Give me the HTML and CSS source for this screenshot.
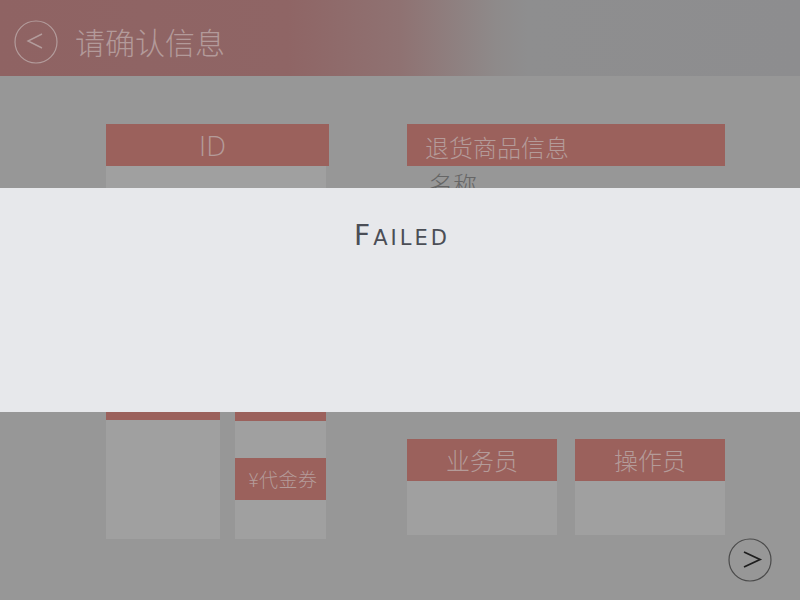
FILE: index.html
```html
<!DOCTYPE html>
<html lang="zh">
<head>
<meta charset="utf-8">
<title>请确认信息</title>
<link rel="stylesheet" href="styles.css">
</head>
<body>
<div class="page">
  <header class="topbar">
    <div class="round-btn back-btn">
      <svg width="44" height="44" viewBox="0 0 44 44"><circle cx="22" cy="22" r="21" fill="none" stroke="#b39c9c" stroke-width="1.2"/><polyline points="28,14 14,21 28,28" fill="none" stroke="#b39c9c" stroke-width="1.4"/></svg>
    </div>
    <h1 class="title">请确认信息</h1>
  </header>
  <main class="content">
    <section class="col-left">
      <div class="card id-card">
        <div class="card-head id-head">ID</div>
        <div class="card-body id-body"></div>
      </div>
      <div class="sub-row">
        <div class="card sub-a">
          <div class="card-head"></div>
          <div class="card-body sub-a-body"></div>
        </div>
        <div class="card sub-b">
          <div class="card-head"></div>
          <div class="card-body sub-b-body">
            <div class="coupon">¥代金券</div>
          </div>
        </div>
      </div>
    </section>
    <section class="col-right">
      <div class="card goods">
        <div class="card-head goods-head">退货商品信息</div>
        <div class="goods-body">
          <div class="goods-row">名称</div>
        </div>
      </div>
      <div class="people">
        <div class="card person">
          <div class="card-head">业务员</div>
          <div class="card-body person-body"></div>
        </div>
        <div class="card person">
          <div class="card-head">操作员</div>
          <div class="card-body person-body"></div>
        </div>
      </div>
    </section>
  </main>
  <div class="round-btn next-btn">
    <svg width="44" height="44" viewBox="0 0 44 44"><circle cx="22" cy="22" r="21" fill="none" stroke="#4a4a4a" stroke-width="1.2"/><polyline points="16,14 32,21.5 16,29" fill="none" stroke="#1e1e1e" stroke-width="1.8"/></svg>
  </div>
  <div class="overlay">
    <div class="failed"><span class="cap">F</span><span class="small">ailed</span></div>
  </div>
</div>
</body>
</html>
```

FILE: styles.css
```css
* { box-sizing: border-box; }
html, body { margin: 0; padding: 0; }
body {
  width: 800px;
  height: 600px;
  overflow: hidden;
  background: #979797;
  font-family: "Noto Sans CJK SC", "Noto Sans", sans-serif;
}
.page {
  position: relative;
  width: 800px;
  height: 600px;
  background: #979797;
}
.topbar {
  height: 76px;
  display: flex;
  align-items: center;
  padding-left: 14px;
  background: linear-gradient(to right, #8f6363 0%, #8f6565 36%, #8f7272 50%, #8e8a8a 62%, #8e8e8f 66%, #8d8d8f 100%);
}
.round-btn { width: 44px; height: 44px; }
.round-btn svg { display: block; }
.back-btn { margin-top: 8px; }
.title {
  margin: 6px 0 0 17px;
  font-size: 30px;
  font-weight: 300;
  color: #b39a9a;
  line-height: 1;
}
.content {
  display: flex;
  padding: 48px 0 0 106px;
}
.col-left { width: 223px; }
.col-right { width: 318px; margin-left: 78px; }
.card-head {
  height: 42px;
  background: #9b615c;
  color: #b49b99;
  font-size: 24px;
  font-weight: 300;
  line-height: 42px;
  text-align: center;
}
.card-body { background: #a0a0a0; }
.id-head {
  font-family: "Open Sans", "Noto Sans", sans-serif;
  font-size: 28px;
  font-weight: 300;
  padding-right: 10px;
}
.id-body { width: 220px; height: 100px; }
.sub-row {
  display: flex;
  align-items: flex-start;
  gap: 15px;
  margin-top: 112px;
}
.sub-a { width: 114px; }
.sub-a-body { height: 119px; }
.sub-b { width: 91px; margin-top: 1px; }
.sub-b-body { height: 118px; padding-top: 37px; }
.coupon {
  height: 42px;
  background: #9b615c;
  color: #b49b99;
  font-size: 19px;
  font-weight: 300;
  line-height: 42px;
  text-align: center;
  padding-left: 5px;
  letter-spacing: 0.5px;
}
.goods-head {
  text-align: left;
  padding-left: 18px;
  line-height: 46px;
}
.goods-body { height: 250px; }
.goods-row {
  padding: 2px 0 0 22px;
  font-size: 24px;
  font-weight: 300;
  color: #666666;
  line-height: 32px;
}
.people {
  display: flex;
  gap: 18px;
  margin-top: 23px;
}
.person { width: 150px; }
.person-body { height: 54px; }
.next-btn {
  position: absolute;
  right: 28px;
  bottom: 18px;
}
.overlay {
  position: absolute;
  left: 0;
  top: 188px;
  width: 800px;
  height: 224px;
  background: #e7e8eb;
}
.failed {
  padding-top: 30px;
  padding-left: 4px;
  text-align: center;
  font-family: "DejaVu Sans", sans-serif;
  letter-spacing: 3px;
  color: #4b4e56;
  line-height: 36px;
}
.failed .cap { font-size: 28px; }
.failed .small { font-size: 21px; text-transform: uppercase; }
```
